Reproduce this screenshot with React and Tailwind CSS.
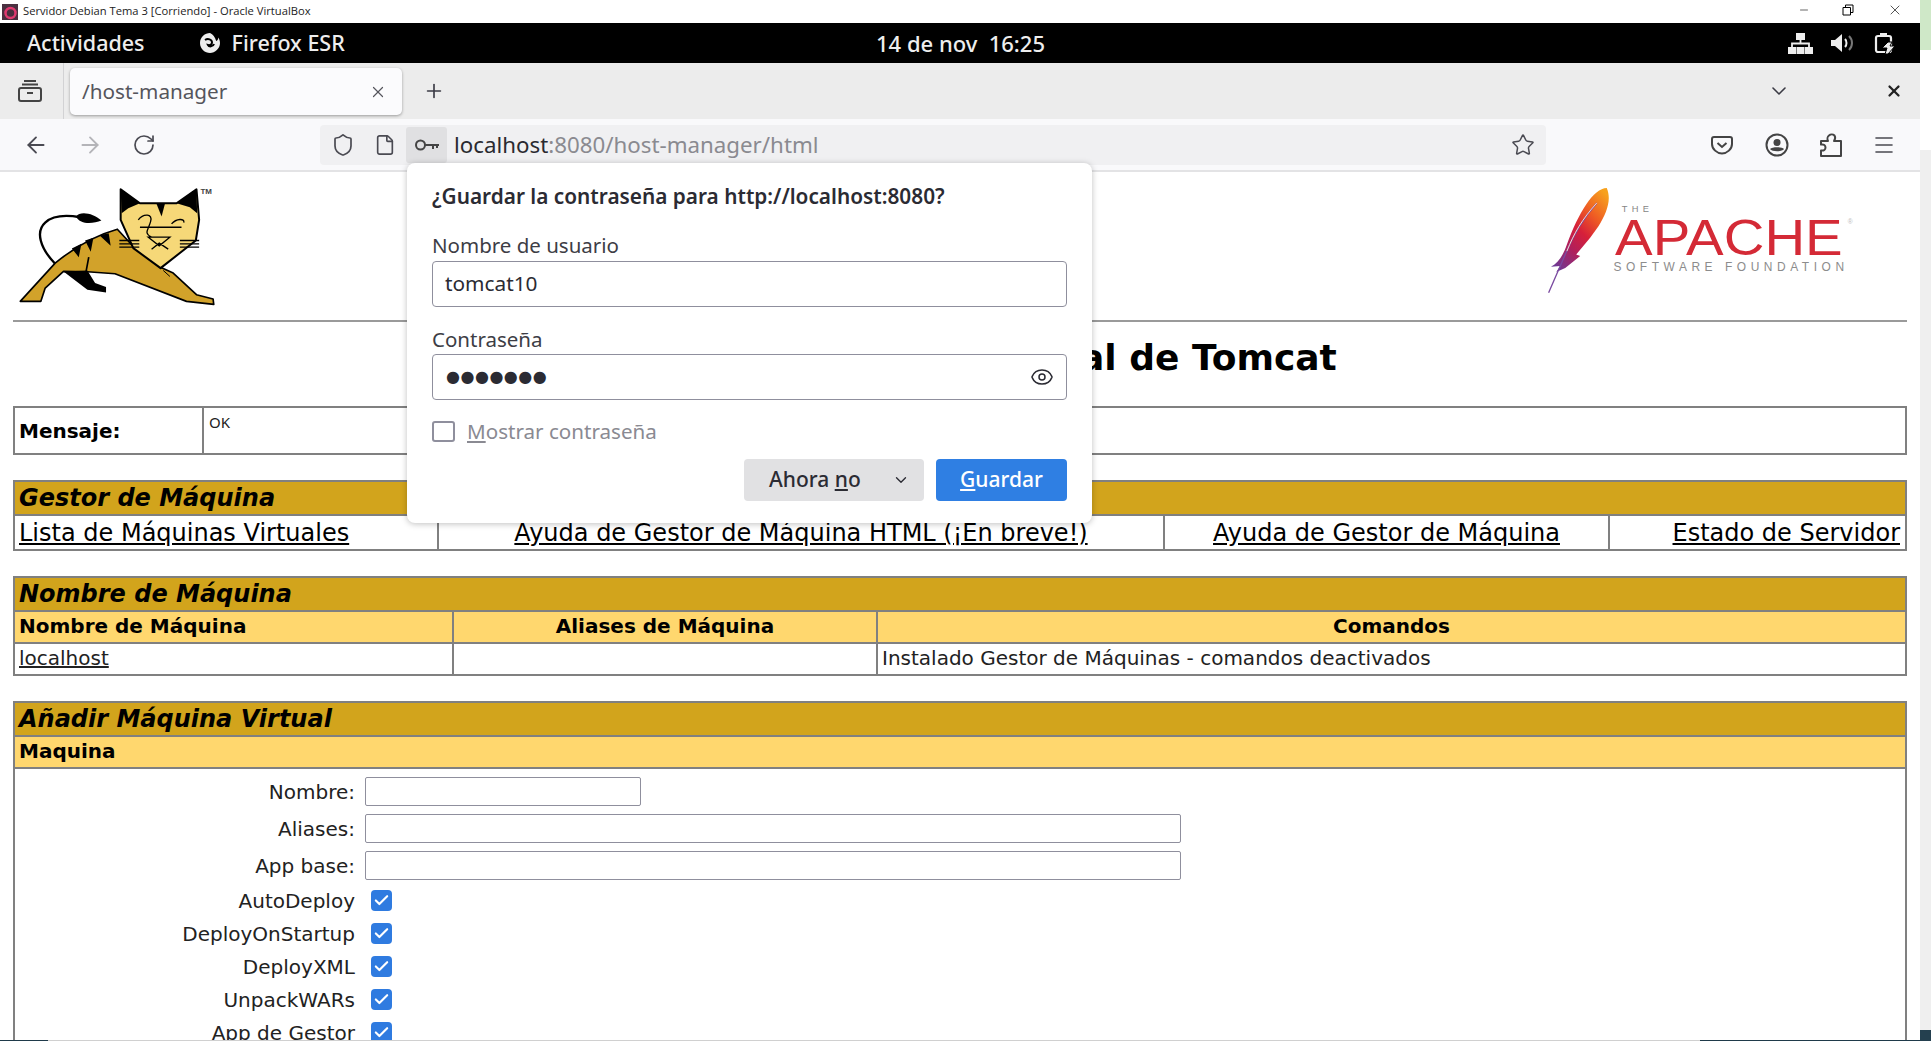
import React from 'react';
import { ArrowLeft, ArrowRight, RotateCw, Plus, X, ChevronDown, Star, Menu, Shield, File, Eye, Check, Minus } from 'lucide-react';

const TomcatLogo = () => (
  <svg width="240" height="133" viewBox="0 540 720 400">
    {/* tail */}
    <path d="M165 792C120 745 105 695 135 668C160 645 200 645 240 652" fill="none" stroke="#000" strokeWidth="7" />
    <path d="M228 650C240 632 280 640 304 662C280 672 240 676 228 650Z" fill="#000" />
    {/* body */}
    <path d="M60 905L165 790C220 745 290 705 352 688L400 740L480 802L520 820L590 885L640 898L642 914L560 905L345 822L262 816L190 815L135 865L122 905Z" fill="#d2a22a" stroke="#000" strokeWidth="5" strokeLinejoin="round" />
    <path d="M190 815L262 812L285 850L318 862L318 878L262 870Z" fill="#000" />
    <path d="M266 772L258 815" stroke="#000" strokeWidth="5" />
    <path d="M298 706L332 738L326 700ZM255 722L272 756L280 714ZM215 746L236 772L244 732Z" fill="#000" />
    <path d="M490 812L510 830" stroke="#000" strokeWidth="3" fill="none" />
    {/* head */}
    <path d="M362 568L420 610L530 610L590 568L598 660L588 722L482 805L400 745L362 660Z" fill="#f6d878" stroke="#000" strokeWidth="6" strokeLinejoin="round" />
    <path d="M362 568L420 610L385 625L365 640Z" fill="#000" />
    <path d="M590 568L530 610L570 622L592 640Z" fill="#000" />
    <path d="M470 612L485 650L495 612Z" fill="#000" />
    <path d="M415 660C430 640 460 640 452 665C445 690 430 700 455 712M515 672C530 655 555 655 552 668M420 682H545M445 712H510L478 738ZM455 748L478 730L505 748" fill="none" stroke="#000" strokeWidth="4" />
    <path d="M358 722H418M358 732H418M358 742H418M540 722H598M540 732H598M540 742H598" stroke="#000" strokeWidth="4" />
    <text x="602" y="583" fontFamily="Liberation Sans" fontSize="24" fontWeight="700" fill="#444">TM</text>
  </svg>
);

const ApacheLogo = () => (
  <svg width="317" height="113" viewBox="280 550 950 340">
    <defs>
      <linearGradient id="fth" x1="0.85" y1="0" x2="0.15" y2="1">
        <stop offset="0" stopColor="#f7a11d" />
        <stop offset="0.28" stopColor="#ee5a24" />
        <stop offset="0.5" stopColor="#d6203a" />
        <stop offset="0.72" stopColor="#b01f5c" />
        <stop offset="1" stopColor="#6c3a96" />
      </linearGradient>
    </defs>
    <path d="M470 565C430 565 385 640 350 735C340 765 325 790 302 802L330 800L318 818L345 806L390 770L378 765L420 715L445 680C470 640 485 600 470 565Z" fill="url(#fth)" />
    <path d="M295 880L345 765C370 705 395 660 440 610" fill="none" stroke="#7a4aa0" strokeWidth="4" />
    <path d="M350 755C372 700 395 660 440 610" fill="none" stroke="#fbd6c8" strokeWidth="3" />
    <text x="515" y="636" fontFamily="Liberation Sans" fontSize="28" fill="#858585" textLength="82">THE</text>
    <text x="495" y="767" fontFamily="Liberation Sans" fontSize="152" fill="#d42a36" textLength="685" lengthAdjust="spacingAndGlyphs">APACHE</text>
    <text x="1195" y="672" fontFamily="Liberation Sans" fontSize="20" fill="#bbb">®</text>
    <text x="490" y="814" fontFamily="Liberation Sans" fontSize="36" fill="#8c8c8c" textLength="694">SOFTWARE FOUNDATION</text>
  </svg>
);

const TitleBar = () => (
  <div className="h-[23px] bg-white flex items-center shrink-0 font-['Open_Sans',sans-serif] text-[11.2px] text-[#222]">
    <svg width="16" height="16" viewBox="0 0 16 16" className="ml-[2px]">
      <rect width="16" height="16" fill="#4a3040" />
      <circle cx="8.5" cy="9" r="5" fill="none" stroke="#e03a70" strokeWidth="2.5" />
    </svg>
    <span className="ml-[5px] whitespace-nowrap">Servidor Debian Tema 3 [Corriendo] - Oracle VirtualBox</span>
    <div className="ml-auto flex items-center h-full pb-[3px] text-black">
      <Minus size={12} strokeWidth={1.2} className="mr-[32px]" />
      <svg width="12" height="12" viewBox="0 0 12 12" fill="none" stroke="#000" className="mr-[33px]">
        <path d="M3.5 3V1H11V8.5H8.5M1 3.5H8.5V11H1Z" />
      </svg>
      <X size={16} strokeWidth={1} className="mr-[17px]" />
    </div>
  </div>
);

const GnomeBar = () => (
  <div className="h-[40px] bg-black text-[#eee] flex items-center relative shrink-0 font-['Noto_Sans',sans-serif] text-[21.5px] font-medium">
    <span className="ml-[27px]">Actividades</span>
    <svg width="24" height="24" viewBox="0 0 24 24" className="ml-[53px]">
      <path d="M12 2C7 2 2 6 2 12s5 10 10 10 10-4.500 10-10c0-2-.7-4-1.800-5.500 0 1.500-.5 3-2 3.500C17 6 15 3.500 12 2Z" fill="#eee" />
      <path d="M7 9c3-2 7-.5 7 2.500 0 2-2 3-4 2.500 1 2 5 2 6-1" fill="none" stroke="#000" strokeWidth="2" />
    </svg>
    <span className="ml-[10px]">Firefox ESR</span>
    <span className="absolute left-[876px] whitespace-pre text-[22px]">14 de nov  16:25</span>
    <div className="ml-auto flex items-center mr-[24px] gap-[18px]">
      <svg width="25" height="21" viewBox="0 0 25 21" fill="#eee">
        <path d="M8 0H17V7H8ZM0 14H8V21H0ZM8.500 14H16.500V21H8.500ZM17 14H25V21H17Z" />
        <path d="M12.500 7V11M4 14V10.500H21V14" fill="none" stroke="#eee" strokeWidth="1.800" />
      </svg>
      <svg width="25" height="20" viewBox="0 0 25 20">
        <path d="M0 7H4L11 1V19L4 13H0Z" fill="#eee" />
        <path d="M14 6C16 8 16 12 14 14" fill="none" stroke="#eee" strokeWidth="2" />
        <path d="M18 3C22 7 22 13 18 17" fill="none" stroke="#777" strokeWidth="2" />
      </svg>
      <svg width="22" height="22" viewBox="0 0 22 22" fill="none">
        <path d="M6 1H13V4H6Z" fill="#eee" />
        <rect x="2" y="4" width="15" height="16" rx="2" stroke="#eee" strokeWidth="2.200" />
        <path d="M14 10L8 16H13L11 22H14L21 14H16L18 10Z" fill="#eee" stroke="#000" />
      </svg>
    </div>
  </div>
);

const TabBar = () => (
  <div className="h-[56px] bg-[#ececec] flex items-center shrink-0 text-[#3a3a44]">
    <div className="w-[64px] h-full flex items-center justify-center border-r border-[#d2d2d4] pr-[4px]">
      <svg width="26" height="22" viewBox="0 0 26 22" fill="none" stroke="#444" strokeWidth="2">
        <rect x="2" y="8" width="22" height="13" rx="2" />
        <path d="M5 4.500H21M7 1H19M10 13H16" />
      </svg>
    </div>
    <div className="ml-[6px] w-[332px] h-[47px] bg-[#fbfbfd] rounded-[5px] shadow-[0_1px_3px_rgba(0,0,0,0.35)] flex items-center justify-between pl-[12px] pr-[15px] pt-[1px] font-['Noto_Sans',sans-serif] text-[20.7px] text-[#55555c]">
      <span>/host-manager</span>
      <X size={18} strokeWidth={1.6} />
    </div>
    <Plus size={22} strokeWidth={1.8} className="ml-[21px]" />
    <ChevronDown size={24} strokeWidth={1.6} className="ml-auto mr-[94px]" />
    <X size={18} strokeWidth={3} className="mr-[17px] text-[#222]" />
  </div>
);

const NavBar = () => (
  <div className="h-[53px] bg-[#f9f9fb] border-b-2 border-[#e3e3e5] flex items-center shrink-0 text-[#4a4a52]">
    <ArrowLeft size={26} strokeWidth={1.7} className="ml-[23px]" />
    <ArrowRight size={26} strokeWidth={1.7} className="ml-[28px] text-[#b4b4b8]" />
    <RotateCw size={24} strokeWidth={1.7} className="ml-[29px]" />
    <div className="ml-[164px] w-[1226px] h-[40px] bg-[#f0f0f2] rounded-[4px] flex items-center">
      <Shield size={24} strokeWidth={1.7} className="ml-[11px]" />
      <File size={22} strokeWidth={1.8} className="ml-[19px]" />
      <div className="ml-[10px] w-[41px] h-[36px] bg-[#e0e0e2] rounded-[3px] flex items-center justify-center">
        <svg width="26" height="14" viewBox="0 0 26 14" fill="none" stroke="#444" strokeWidth="2">
          <circle cx="6.500" cy="7" r="4.500" />
          <path d="M11 7H25M19 7V11M23 7V10" />
        </svg>
      </div>
      <span className="ml-[7px] font-['Noto_Sans',sans-serif] text-[22.3px] text-[#2a2a30]">localhost<span className="text-[#8a8a90]">:8080/host-manager/html</span></span>
      <Star size={24} strokeWidth={1.5} className="ml-auto mr-[11px]" />
    </div>
    <svg width="22" height="20" viewBox="0 0 22 20" fill="none" stroke="#444" strokeWidth="2" className="ml-[165px]">
      <path d="M3 2H19C20 2 21 3 21 4V9C21 14 16 18.500 11 18.500S1 14 1 9V4C1 3 2 2 3 2Z" />
      <path d="M6.500 8L11 12L15.500 8" />
    </svg>
    <svg width="24" height="24" viewBox="0 0 24 24" className="ml-[32px]">
      <circle cx="12" cy="12" r="10.500" fill="none" stroke="#444" strokeWidth="2" />
      <circle cx="12" cy="9.500" r="3.500" fill="#444" />
      <path d="M5 16C7 13.500 17 13.500 19 16C17 19 7 19 5 16Z" fill="#444" />
    </svg>
    <svg width="24" height="24" viewBox="0 0 24 24" fill="none" stroke="#444" strokeWidth="2" strokeLinejoin="round" className="ml-[30px]">
      <path d="M2 23V17.500C5 18 6.500 16.500 6.500 14.500S5 11 2 11.500V8H9C8 6 8.500 3.500 10 2.500C11.500 1 14 1 15.500 2.500C16.500 4 16 6.500 15 8H22V23Z" />
    </svg>
    <Menu size={24} strokeWidth={1.6} className="ml-[29px]" />
  </div>
);

const Cell = ({ className = '', children }) => (
  <div className={`flex items-center px-[5px] ${className}`}>{children}</div>
);

const SectionHead = ({ children }) => (
  <div className="h-[34px] bg-[#d2a41c] border-b-2 border-[#808080] flex items-center pl-[4px] text-[24px] font-bold italic text-black">{children}</div>
);

const FormRow = ({ label, children, className = '' }) => (
  <div className={`flex items-center ${className}`}>
    <div className="w-[340px] text-right text-[20px] text-[#222]">{label}</div>
    {children}
  </div>
);

const Tick = () => (
  <div className="ml-[16px] w-[21px] h-[21px] rounded-[4px] bg-[#2f7be0] flex items-center justify-center">
    <Check size={17} strokeWidth={3} className="text-white" />
  </div>
);

const Page = () => (
  <div className="flex-1 min-h-0 overflow-hidden bg-white px-[13px] font-['DejaVu_Sans',sans-serif] text-black">
    <div className="h-[150px] flex justify-between items-start border-b-2 border-[#9a9a9a]">
      <div className="pt-[8px] -ml-[13px]"><TomcatLogo /></div>
      <div className="pt-[11px] mr-[47px]"><ApacheLogo /></div>
    </div>
    <h1 className="h-[84px] pb-[12px] flex items-center justify-center text-[36px] font-bold">Gestor de Máquina Virtual de Tomcat</h1>

    <div className="h-[49px] border-2 border-[#808080] flex">
      <Cell className="w-[189px] border-r-2 border-[#808080] text-[20px] font-bold pl-[4px]">Mensaje:</Cell>
      <div className="pl-[5px] pt-[3px] font-['Noto_Sans',sans-serif] text-[15px] text-[#222]">OK</div>
    </div>

    <div className="mt-[25px] h-[71px] border-2 border-[#808080]">
      <SectionHead>Gestor de Máquina</SectionHead>
      <div className="h-[33px] flex text-[24px]">
        <Cell className="w-[424px] border-r-2 border-[#808080] pl-[4px]"><a className="underline">Lista de Máquinas Virtuales</a></Cell>
        <Cell className="w-[726px] border-r-2 border-[#808080] justify-center"><a className="underline">Ayuda de Gestor de Máquina HTML (¡En breve!)</a></Cell>
        <Cell className="w-[445px] border-r-2 border-[#808080] justify-center"><a className="underline">Ayuda de Gestor de Máquina</a></Cell>
        <Cell className="flex-1 justify-end"><a className="underline">Estado de Servidor</a></Cell>
      </div>
    </div>

    <div className="mt-[25px] h-[100px] border-2 border-[#808080]">
      <SectionHead>Nombre de Máquina</SectionHead>
      <div className="h-[32px] flex bg-[#ffd76e] border-b-2 border-[#808080] text-[20px] font-bold">
        <Cell className="w-[439px] border-r-2 border-[#808080] pb-[2px] pl-[4px]">Nombre de Máquina</Cell>
        <Cell className="w-[424px] border-r-2 border-[#808080] pb-[2px] justify-center">Aliases de Máquina</Cell>
        <Cell className="flex-1 pb-[2px] justify-center">Comandos</Cell>
      </div>
      <div className="h-[30px] flex text-[20px] text-[#222]">
        <Cell className="w-[439px] border-r-2 border-[#808080] pb-[2px] pl-[4px]"><a className="underline">localhost</a></Cell>
        <Cell className="w-[424px] border-r-2 border-[#808080]" />
        <Cell className="flex-1 pb-[2px] pl-[4px]">Instalado Gestor de Máquinas - comandos deactivados</Cell>
      </div>
    </div>

    <div className="mt-[25px] h-[400px] border-2 border-[#808080]">
      <SectionHead>Añadir Máquina Virtual</SectionHead>
      <div className="h-[32px] bg-[#ffd76e] border-b-2 border-[#808080] flex items-center pl-[4px] pb-[3px] text-[20px] font-bold">Maquina</div>
      <div className="pt-[4px]">
        <FormRow label="Nombre:" className="h-[37px]"><input readOnly className="ml-[10px] w-[276px] h-[29px] border border-[#8f8f9d] rounded-[2px] bg-white" /></FormRow>
        <FormRow label="Aliases:" className="h-[37px]"><input readOnly className="ml-[10px] w-[816px] h-[29px] border border-[#8f8f9d] rounded-[2px] bg-white" /></FormRow>
        <FormRow label="App base:" className="h-[37px]"><input readOnly className="ml-[10px] w-[816px] h-[29px] border border-[#8f8f9d] rounded-[2px] bg-white" /></FormRow>
        <FormRow label="AutoDeploy" className="h-[33px]"><Tick /></FormRow>
        <FormRow label="DeployOnStartup" className="h-[33px]"><Tick /></FormRow>
        <FormRow label="DeployXML" className="h-[33px]"><Tick /></FormRow>
        <FormRow label="UnpackWARs" className="h-[33px]"><Tick /></FormRow>
        <FormRow label="App de Gestor" className="h-[33px]"><Tick /></FormRow>
      </div>
    </div>
  </div>
);

const SavePasswordPopup = () => (
  <div className="absolute left-[407px] top-[163px] w-[685px] h-[360px] bg-white rounded-[8px] shadow-[0_1px_6px_rgba(0,0,0,0.25)] px-[25px] font-['Noto_Sans',sans-serif] text-[#2b2b33]">
    <div className="mt-[19px] h-[28px] text-[20.8px] font-semibold leading-[28px] whitespace-nowrap">¿Guardar la contraseña para http://localhost:8080?</div>
    <div className="mt-[21px] h-[28px] text-[20.5px] leading-[28px] text-[#3d3d45]">Nombre de usuario</div>
    <div className="mt-[2px] h-[46px] border border-[#8f8f9d] rounded-[4px] flex items-center pl-[12px] text-[20.8px]">tomcat10</div>
    <div className="mt-[18px] h-[28px] text-[20.5px] leading-[28px] text-[#3d3d45]">Contraseña</div>
    <div className="mt-[1px] h-[46px] border border-[#8f8f9d] rounded-[4px] flex items-center justify-between pl-[13px] pr-[12px]">
      <span className="font-['DejaVu_Sans',sans-serif] text-[16px] tracking-[0.5px]">●●●●●●●</span>
      <Eye size={24} strokeWidth={1.5} />
    </div>
    <div className="mt-[21px] h-[20px] flex items-center">
      <div className="w-[23px] h-[21px] border-2 border-[#8f8f9d] rounded-[3px]" />
      <span className="ml-[12px] text-[20.6px] text-[#8a8a92]"><u>M</u>ostrar contraseña</span>
    </div>
    <div className="mt-[18px] flex justify-end gap-[12px] text-[21px] font-medium">
      <div className="w-[180px] h-[42px] bg-[#e1e1e3] rounded-[4px] flex items-center pl-[25px] pr-[14px] justify-between">
        <span>Ahora <u>n</u>o</span>
        <ChevronDown size={18} strokeWidth={1.8} />
      </div>
      <div className="w-[131px] h-[42px] bg-[#2f7fe3] rounded-[4px] flex items-center justify-center text-white"><span><u>G</u>uardar</span></div>
    </div>
  </div>
);

const App = () => {
  return (
    <div className="relative w-[1931px] h-[1041px] overflow-hidden flex bg-white">
      <div className="w-[1920px] h-full flex flex-col">
        <TitleBar />
        <GnomeBar />
        <TabBar />
        <NavBar />
        <Page />
        <div className="h-[1px] shrink-0 flex bg-[#d0d0d0]">
          <div className="w-[48px] bg-[#1f3a4a]" />
          <div className="ml-auto w-[220px] bg-[#1f3a4a]" />
        </div>
      </div>
      <div className="w-[11px] h-full flex flex-col">
        <div className="h-[50px] bg-[#cfe8c8]" />
        <div className="h-[100px] bg-white" />
        <div className="flex-1 bg-[#efefef]" />
        <div className="h-[11px] bg-[#24404f]" />
      </div>
      <SavePasswordPopup />
    </div>
  );
};

export default App;
